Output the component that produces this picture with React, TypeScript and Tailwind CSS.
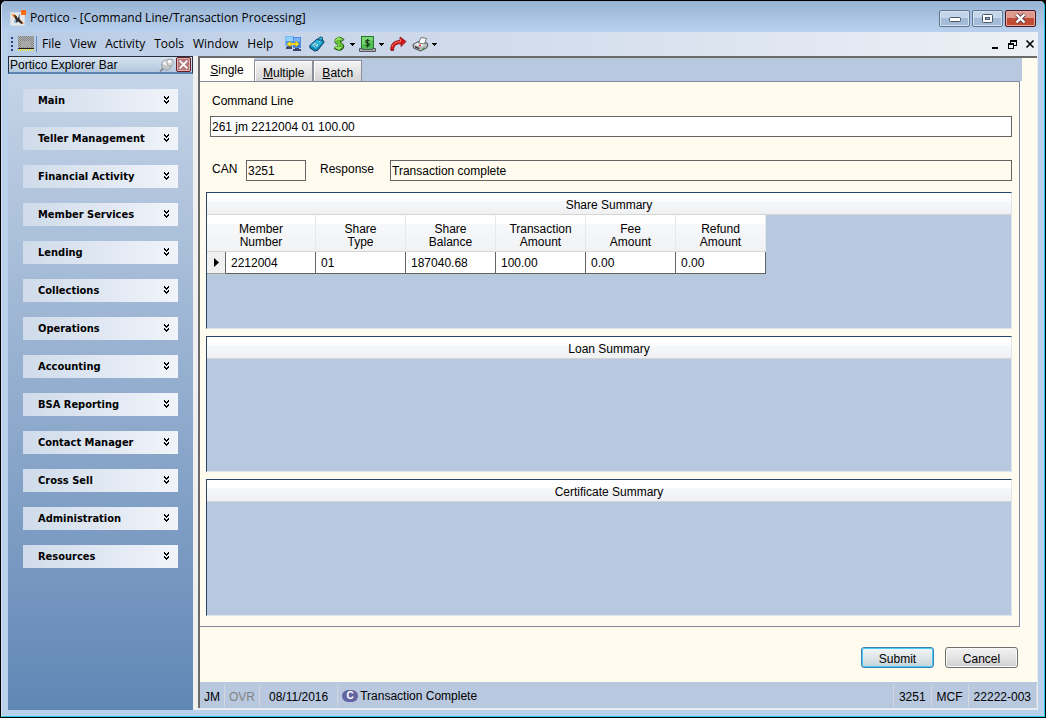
import React from "react";

const sections = [
  "Main", "Teller Management", "Financial Activity", "Member Services", "Lending", "Collections", "Operations",
  "Accounting", "BSA Reporting", "Contact Manager", "Cross Sell", "Administration", "Resources",
];

const columns: [string, string, string][] = [
  ["Member", "Number", "2212004"],
  ["Share", "Type", "01"],
  ["Share", "Balance", "187040.68"],
  ["Transaction", "Amount", "100.00"],
  ["Fee", "Amount", "0.00"],
  ["Refund", "Amount", "0.00"],
];

function AppIcon() {
  return (
    <svg width="17" height="17" viewBox="0 0 17 17" aria-hidden="true">
      <rect x="0.500" y="2.500" width="14" height="13" fill="#e6e9ec" stroke="#d5dbe2" />
      <rect x="11" y="0" width="5" height="5" fill="#ff6a10" />
      <path d="M1.500 4l4.500 1 1 4-3-1zM7 9l4 1 3 4-4-1z" fill="#ff7a1c" />
      <path d="M4 4.500l3 2 .5 2L9 6l1 4 3 3-1.500 1L8 11.500 6.500 13z" fill="#2d2d33" />
      <path d="M8.500 4l2 1-1 3zM4 10l2 1-1 3z" fill="#5b93c0" />
    </svg>
  );
}

function FormIcon() {
  return (
    <svg width="17" height="16" viewBox="0 0 17 16" shapeRendering="crispEdges" aria-hidden="true">
      <defs>
        <pattern id="dither" width="2" height="2" patternUnits="userSpaceOnUse">
          <rect width="2" height="2" fill="#b4b4b4" />
          <rect width="1" height="1" fill="#808080" />
          <rect x="1" y="1" width="1" height="1" fill="#808080" />
        </pattern>
      </defs>
      <rect x="0" y="0" width="16" height="13" fill="url(#dither)" />
      <rect x="3" y="5" width="10" height="6" fill="#a8a8a8" />
      <rect x="0" y="12" width="16" height="1" fill="#222" />
      <path d="M0 14.5h16" stroke="#f3e51d" strokeDasharray="1 1" />
      <path d="M1 13.5h16" stroke="#f3e51d" strokeDasharray="1 1" />
    </svg>
  );
}

function TransferIcon() {
  return (
    <svg width="16" height="16" viewBox="0 0 16 16" aria-hidden="true">
      <rect x="0.500" y="0.500" width="8" height="9" fill="#4a9bee" stroke="#78b8f6" />
      <rect x="8.500" y="1.500" width="7" height="10" fill="#3a78dc" stroke="#4f8ce8" />
      <path d="M1 1h7v4H1z" fill="#8fd0ff" />
      <path d="M9 2h6v4H9z" fill="#79b4f8" />
      <path d="M2 10h5v1H2zM1 11h6v2H1zM10 12h4v1h-4zM8 13h8v2H8z" fill="#3c4670" />
      <path d="M1.500 8l4-3v2h5V5l4 3-4 3V9h-5v2z" fill="#ffe22a" stroke="#a98b00" strokeWidth="0.400" />
    </svg>
  );
}

function PagerIcon() {
  return (
    <svg width="16" height="16" viewBox="0 0 16 16" aria-hidden="true">
      <path d="M.8 9.500L8 3l5 0 2.200 3-6.700 8.500-3 .5L1 12z" fill="#1088b4" stroke="#0a3f60" />
      <path d="M1.500 9.500L8.300 3.500l5 3L7 13z" fill="#2bb2d6" />
      <path d="M9 3.500L11 .8l2.500.7-.5 3z" fill="#36bde0" stroke="#0a3f60" strokeWidth="0.800" />
      <path d="M3 9.200l3-2.500 3.500 2-2.800 2.700z" fill="#a7ebf6" />
      <path d="M4.500 9.300h1.200M6.500 8.300h1M6 10.300h1" stroke="#075070" />
      <path d="M10 6l1.500-1" stroke="#bdf4ff" />
    </svg>
  );
}

function DollarIcon() {
  return (
    <svg width="14" height="16" viewBox="0 0 14 16" fill="none" aria-hidden="true">
      <path d="M11 4.800C9.500 2.500 4 2.600 4.200 5.300 4.400 8 10.800 7.300 10.500 10.300 10.200 13.200 5 13.300 3 11M7.500 1v14" stroke="#2d571c" strokeWidth="3.600" />
      <path d="M10.500 4.300C9 2.400 3.800 2.500 4 5.200 4.200 7.700 10.300 7.300 10 10 9.800 12.600 4.800 12.800 3 10.500M7 .5v14" stroke="#68ca34" strokeWidth="2.200" />
      <path d="M9.500 3.300C8 2.400 4 2.800 3.900 4.800M4 11.500c2 1.200 4 .7 5-.2" stroke="#cdf7a2" strokeWidth="0.900" />
    </svg>
  );
}

function CashIcon() {
  return (
    <svg width="17" height="16" viewBox="0 0 17 16" fill="none" aria-hidden="true">
      <rect x="2.500" y="0.500" width="12" height="13" fill="#53bd55" stroke="#247a2a" />
      <path d="M3 1h11v3L3 9z" fill="#79d574" />
      <path d="M10.500 5.200C9.500 3.700 6.500 4 6.700 5.600S10.500 7 10.300 8.600 7.500 10.300 6.500 9M8.500 3v8.500" stroke="#143d18" strokeWidth="1.200" />
      <path d="M0.500 12.500h3v1h10v-1h3v3H0.500z" fill="#a9adb0" stroke="#55595c" />
    </svg>
  );
}

function ForwardIcon() {
  return (
    <svg width="17" height="16" viewBox="0 0 17 16" aria-hidden="true">
      <path d="M1 14.500C-.2 8.500 4 4.500 10 4.500V1l6 4.500-5 5V7.800C7 7.500 3.500 9 3.500 14.500z" fill="#d81818" stroke="#7e0b0b" strokeWidth="0.800" />
      <path d="M2 11c.5-3 4-5.300 8.500-5.300V3" fill="none" stroke="#ff7565" />
    </svg>
  );
}

function PrinterIcon() {
  return (
    <svg width="17" height="16" viewBox="0 0 17 16" aria-hidden="true">
      <path d="M1 8.500l5.500-3 8.500 1.500 1 2-1.500 3L8.500 15l-7-3z" fill="#b5b8bb" stroke="#3e4144" strokeWidth="0.900" />
      <path d="M2 8.500l4-2 8 1.500-5 3z" fill="#eceeef" />
      <path d="M6.500 7L9 1.500l5.500 1L12.500 8z" fill="#fff" stroke="#555" strokeWidth="0.800" />
      <path d="M3 10l4.500 2-.5 1.300-4-1.800z" fill="#333" />
      <circle cx="8" cy="9.500" r="1.100" fill="#e52626" />
      <path d="M10 12.500l3-1.300v1l-3 1.300z" fill="#3fae3f" />
    </svg>
  );
}

function Caret() {
  return (
    <svg width="5" height="3" viewBox="0 0 5 3" shapeRendering="crispEdges" aria-hidden="true">
      <path d="M0 0h5v1H4v1H3v1H2V2H1V1H0z" fill="#000" />
    </svg>
  );
}

function Pin() {
  return (
    <svg width="16" height="16" viewBox="0 0 16 16" aria-hidden="true">
      <path d="M1 14.500l4-4" stroke="#777" strokeWidth="1.500" />
      <circle cx="7.500" cy="8" r="5" fill="#c3c7cb" stroke="#9a9ea2" />
      <path d="M3.500 7c.5-2 2.500-3.500 4.500-3.500L9 9z" fill="#f5f6f7" />
      <circle cx="11" cy="5.500" r="3.500" fill="#d3d6d9" stroke="#a0a4a8" />
      <circle cx="10.500" cy="4.500" r="1.600" fill="#fff" />
    </svg>
  );
}

function Chevrons() {
  return (
    <svg width="7" height="8" viewBox="0 0 7 8" fill="#000" shapeRendering="crispEdges" aria-hidden="true">
      <path d="M1 0h1v1h1v1h1V1h1V0h1v2H5v1H4v1H3V3H2V2H1zM1 4h1v1h1v1h1V5h1V4h1v2H5v1H4v1H3V7H2V6H1z" />
    </svg>
  );
}

function Cross({ size, className }: { size: number; className: string }) {
  return (
    <svg width={size} height={size} viewBox="0 0 10 10" className={className} aria-hidden="true">
      <path d="M1.500 1.500l7 7M8.500 1.500l-7 7" stroke="currentColor" strokeWidth="1.600" />
    </svg>
  );
}

const captionButton =
  "flex h-[17px] w-[31px] items-center justify-center rounded-[2px] border border-[#5d7490] bg-linear-to-b from-[#c5d6ea] from-50% to-[#a3bbd7] to-50% shadow-[inset_0_0_0_1px_#d5e3f3]";

function TitleBar() {
  return (
    <header className="flex h-[31px] items-center justify-between bg-linear-to-b from-[#98b3d2] to-[#b9d1ee] px-[8px] pt-[3px]">
      <div className="flex items-center gap-[3px] text-[12px] leading-4 text-black">
        <AppIcon />
        <h1>Portico - [Command Line/Transaction Processing]</h1>
      </div>
      <div className="flex gap-[2px]">
        <button aria-label="Minimize" className={captionButton}>
          <svg width="12" height="5" viewBox="0 0 12 5" className="mt-[3px]"><rect x="0.500" y="0.500" width="11" height="4" rx="1" fill="#fff" stroke="#4a5566" /></svg>
        </button>
        <button aria-label="Maximize" className={captionButton}>
          <svg width="11" height="9" viewBox="0 0 11 9"><rect x="0.500" y="0.500" width="10" height="8" rx="1" fill="#fff" stroke="#4a5566" /><rect x="3.500" y="3.500" width="4" height="2" fill="#9eb6d2" stroke="#4a5566" /></svg>
        </button>
        <button aria-label="Close" className="flex h-[17px] w-[31px] items-center justify-center rounded-[2px] border border-[#4a1420] bg-linear-to-b from-[#dc9a8c] from-50% to-[#c14b33] to-50% shadow-[inset_0_0_0_1px_#e5aa9f]">
          <svg width="13" height="11" viewBox="0 0 13 11"><path d="M2.500 1.500l8 8M10.500 1.500l-8 8" stroke="#5c3a48" strokeWidth="4" /><path d="M2.500 1.500l8 8M10.500 1.500l-8 8" stroke="#fff" strokeWidth="2.400" /></svg>
        </button>
      </div>
    </header>
  );
}

function MenuBar() {
  return (
    <nav className="flex h-6 items-center justify-between bg-linear-to-r from-[#b9cce6] via-[#cdd8ea] via-40% to-[#edf1f6] pr-[3px] pl-[3px]">
      <div className="flex items-center">
        <svg width="3" height="14" viewBox="0 0 3 14" shapeRendering="crispEdges" aria-hidden="true">
          <path d="M0 0h2v2H0zM0 4h2v2H0zM0 8h2v2H0zM0 12h2v2H0z" fill="#27417a" />
        </svg>
        <span className="ml-[4px] border-r border-[#6a8ccb] pr-px"><FormIcon /></span>
        <div className="flex gap-[9px] pl-[5px] text-[12px] leading-4">
          {["File", "View", "Activity", "Tools", "Window", "Help"].map((m) => (
            <button key={m}>{m}</button>
          ))}
        </div>
        <div className="ml-3 flex items-center">
          <button aria-label="Transfer" className="mr-2"><TransferIcon /></button>
          <button aria-label="Pager" className="mr-[7px]"><PagerIcon /></button>
          <button aria-label="Deposit" className="mr-[4px] flex items-center gap-[4px]"><DollarIcon /><Caret /></button>
          <button aria-label="Cash" className="mr-[6px] flex items-center gap-[3px]"><CashIcon /><Caret /></button>
          <button aria-label="Forward" className="mr-[5px]"><ForwardIcon /></button>
          <button aria-label="Print" className="flex items-center gap-[3px]"><PrinterIcon /><Caret /></button>
        </div>
      </div>
      <div className="flex items-center gap-[8px]">
        <button aria-label="Minimize document">
          <svg width="10" height="9" viewBox="0 0 10 9" shapeRendering="crispEdges"><path d="M2 7h6v2H2z" /></svg>
        </button>
        <button aria-label="Restore document">
          <svg width="9" height="9" viewBox="0 0 9 9" shapeRendering="crispEdges"><path d="M2 0h7v6H6V5h2V2H3v1H2zM0 3h6v6H0zM1 5v3h4V5z" fillRule="evenodd" /></svg>
        </button>
        <button aria-label="Close document"><Cross size={10} className="text-black" /></button>
      </div>
    </nav>
  );
}

function ExplorerBar() {
  return (
    <aside className="flex w-[185px] shrink-0 flex-col bg-linear-to-b from-[#c8d6e8] to-[#6187b5]">
      <div className="flex h-[18px] items-center justify-between border border-b-2 border-[#26303e] border-b-[#5b84b5] bg-linear-to-b from-[#d6e2ef] to-[#b3c8df] pl-[1px]">
        <h2 className="font-['Liberation_Sans',sans-serif] text-[12px] leading-4">Portico Explorer Bar</h2>
        <div className="flex items-center gap-[1px] pr-px">
          <button aria-label="Pin"><Pin /></button>
          <button aria-label="Close bar" className="flex size-[15px] items-center justify-center rounded-[2px] border border-[#6d1b20] bg-[#b5777a] shadow-[inset_0_0_0_1px_#d9b5b5]">
            <Cross size={11} className="text-white" />
          </button>
        </div>
      </div>
      <div className="flex flex-col gap-[15px] px-[15px] pt-[15px] font-['DejaVu_Sans_Condensed','DejaVu_Sans',sans-serif] text-[11px] leading-6 font-bold">
        {sections.map((s) => (
          <button key={s} className="flex h-[23px] items-start justify-between bg-linear-to-r from-[#cfdbea] to-[#f1f4fa] pr-[8px] pl-[15px] text-left">
            {s}
            <span className="pt-[7px] leading-none"><Chevrons /></span>
          </button>
        ))}
      </div>
    </aside>
  );
}

function SummaryPanel({ title, children }: { title: string; children?: React.ReactNode }) {
  return (
    <section className="min-h-24 flex-1 border border-[#27446b] border-r-[#dfe5ee] border-b-[#dfe5ee] bg-[#b8c8df]">
      <h3 className="h-[22px] border-b border-[#d5d5d5] bg-linear-to-b from-white from-40% via-[#f7f8fa] via-40% to-[#eff0f2] text-center leading-6">
        {title}
      </h3>
      {children}
    </section>
  );
}

function ShareTable() {
  return (
    <table className="w-[559px] table-fixed border-separate border-spacing-0">
      <colgroup>
        <col className="w-[19px]" />
        {columns.map(([a, b]) => <col key={a + b} className="w-[90px]" />)}
      </colgroup>
      <thead>
        <tr className="h-[37px]">
          {columns.map(([a, b], i) => (
            <th key={a + b} colSpan={i === 0 ? 2 : 1} className="border-r border-b border-[#d5d5d5] border-r-[#e6e8ea] bg-linear-to-b from-white from-25% via-[#f7f8fa] via-25% to-[#f1f2f4] px-0 pt-[5px] pb-0 text-center leading-[13px] font-normal">
              {a}<br />{b}
            </th>
          ))}
        </tr>
      </thead>
      <tbody>
        <tr className="h-[22px]">
          <td className="border-r border-b border-r-[#646464] border-b-[#a0a0a0] bg-[#f0f0f0] p-0">
            <svg width="5" height="9" viewBox="0 0 5 9" className="mx-auto"><path d="M0 0l5 4.500L0 9z" /></svg>
          </td>
          {columns.map(([a, b, v]) => (
            <td key={a + b} className="border-r border-b border-[#646464] bg-white py-0 pl-[5px] leading-5">{v}</td>
          ))}
        </tr>
      </tbody>
    </table>
  );
}

const tabClass = "h-[21px] border border-b-0 border-[#8b8e9b] bg-linear-to-b from-[#f4f4f4] to-[#d4d4d4] px-[8px] pt-[3px] leading-4 shadow-[inset_1px_1px_0_#fff]";
const field = "h-[21px] min-w-0 rounded-none border border-[#646464] px-[1px] leading-[19px] outline-none";
const pushButton = "h-[21px] w-[73px] rounded-[3px] border bg-linear-to-b pt-px leading-5";

function Workspace() {
  return (
    <main className="flex min-w-0 flex-1 flex-col border-t-2 border-l-2 border-[#6b6b6b] bg-[#fffbee]">
      <div role="tablist" className="mr-[15px] flex h-[23px] items-end bg-[#b8c8df]">
        <button role="tab" aria-selected="true" className="h-[23px] w-[54px] bg-[#fffdf8] leading-4"><u>S</u>ingle</button>
        <button role="tab" aria-selected="false" className={tabClass}><u>M</u>ultiple</button>
        <button role="tab" aria-selected="false" className={tabClass}><u>B</u>atch</button>
      </div>
      <form className="flex flex-1 flex-col" onSubmit={(e) => e.preventDefault()}>
        <div className="mr-[17px] flex flex-1 flex-col border border-l-0 border-[#85869a] pr-[7px] pb-[10px] pl-[6px] shadow-[2px_0_0_#fff]">
          <div className="flex flex-col gap-[7px] pt-[11px] pl-[4px]">
            <label htmlFor="command" className="pl-[2px] leading-4">Command Line</label>
            <input id="command" defaultValue="261 jm 2212004 01 100.00" className={`${field} bg-white`} />
          </div>
          <div className="flex pt-[23px] pb-[11px] pl-[6px]">
            <label htmlFor="can" className="w-[34px] leading-[19px]">CAN</label>
            <input id="can" readOnly defaultValue="3251" className={`${field} w-[60px]`} />
            <label htmlFor="response" className="w-[84px] pl-[14px] leading-[19px]">Response</label>
            <input id="response" readOnly defaultValue="Transaction complete" className={`${field} flex-1`} />
          </div>
          <div className="flex flex-1 flex-col gap-[7px]">
            <SummaryPanel title="Share Summary"><ShareTable /></SummaryPanel>
            <SummaryPanel title="Loan Summary" />
            <SummaryPanel title="Certificate Summary" />
          </div>
        </div>
        <div className="flex justify-end gap-[11px] pt-5 pr-[19px] pb-[14px]">
          <button type="submit" className={`${pushButton} border-[#3c7fb1] from-[#f2f5f6] via-[#dfe6e9] to-[#c4d3da] shadow-[inset_0_0_0_1px_#45cdf5]`}>Submit</button>
          <button type="button" className={`${pushButton} border-[#707070] from-[#f2f2f2] via-[#e4e4e4] to-[#cfcfcf] shadow-[inset_0_0_0_1px_#f8f8f8]`}>Cancel</button>
        </div>
      </form>
      <footer className="flex h-[26px] items-stretch bg-[#b8c8df] pt-[3px] pb-px leading-6">
        <span className="border-r border-[#d5d7da] px-[4px]">JM</span>
        <span className="border-r border-[#d5d7da] px-[4px] text-[#838383]">OVR</span>
        <span className="border-r border-[#d5d7da] px-[9px]">08/11/2016</span>
        <span className="flex flex-1 items-center gap-[2px] border-r border-[#d5d7da] pl-[4px]">
          <span className="flex h-[12px] w-4 items-center justify-center rounded-full bg-[#6365a0] text-[10px] leading-3 font-bold text-white">C</span>
          Transaction Complete
        </span>
        <span className="border-r border-[#d5d7da] px-[5px]">3251</span>
        <span className="border-r border-[#d5d7da] px-[5px]">MCF</span>
        <span className="border-r border-[#d5d7da] px-[5px]">22222-003</span>
      </footer>
    </main>
  );
}

export default function App() {
  return (
    <div className="flex min-h-screen flex-col bg-black p-px font-['Open_Sans','Noto_Sans',sans-serif] text-black">
      <div className="flex flex-1 flex-col overflow-hidden rounded-t-[5px] border border-t-0 border-[#cfe3f5] border-r-[#25c9e8] border-b-[#25c9e8] bg-[#b9d1ea]">
        <TitleBar />
        <div className="flex flex-1 flex-col px-[6px] pb-[6px]">
          <MenuBar />
          <div className="flex flex-1 gap-[5px] bg-[#f0f0f0]">
            <ExplorerBar />
            <div className="flex min-w-0 flex-1 border-r border-b-2 border-[#e8ebf0] font-['Liberation_Sans',Arial,sans-serif] text-[12px]">
              <Workspace />
            </div>
          </div>
        </div>
      </div>
    </div>
  );
}
